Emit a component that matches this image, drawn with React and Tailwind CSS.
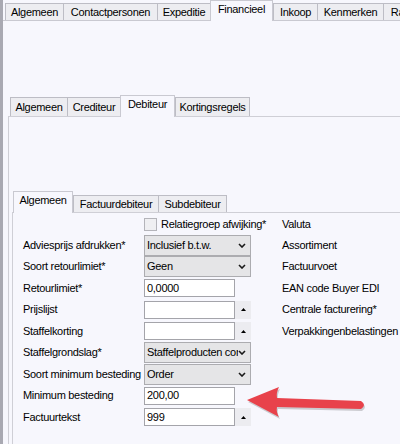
import React from "react";

function Tab({ label, w, selected, h }) {
  if (selected) {
    return (
      <div
        className="relative z-10 -mb-px bg-[#f7f7fd] border-t border-l border-r border-[#c9c9d1] flex items-start justify-center pt-[3px] shrink-0"
        style={{ width: w, height: h }}
      >
        {label}
      </div>
    );
  }
  return (
    <div
      className="bg-[#ededf1] border-t border-l border-r border-[#bdbdc5] flex items-center justify-center shrink-0 -mr-px"
      style={{ width: w, height: h }}
    >
      {label}
    </div>
  );
}

function Chevron() {
  return (
    <svg width="8" height="5" viewBox="0 0 8 5" className="shrink-0">
      <path d="M1 1 L4 4 L7 1" fill="none" stroke="#1a1a1a" strokeWidth="1.6" />
    </svg>
  );
}

function Select({ value }) {
  return (
    <div className="w-[107px] h-[21px] bg-[#e5e5e7] border border-[#acacb0] flex items-center pl-[2px] pr-[4px]">
      <span className="flex-1 min-w-0 overflow-hidden whitespace-nowrap">{value}</span>
      <Chevron />
    </div>
  );
}

function Input({ value, spin }) {
  return (
    <div className="flex items-center h-[18px]">
      <div className="w-[91px] h-[18px] bg-white border border-[#a4a4aa] pl-[2px] flex items-center whitespace-nowrap overflow-hidden">
        {value}
      </div>
      {spin && (
        <div className="w-[16px] h-[18px] bg-[#ececf0] flex items-center justify-center">
          <svg width="5" height="3" viewBox="0 0 5 3">
            <path d="M0 3 L2.5 0 L5 3Z" fill="#000" />
          </svg>
        </div>
      )}
    </div>
  );
}

export default function App() {
  const rows = [
    ["Adviesprijs afdrukken*", <Select value="Inclusief b.t.w." />, "Assortiment"],
    ["Soort retourlimiet*", <Select value="Geen" />, "Factuurvoet"],
    ["Retourlimiet*", <Input value="0,0000" />, "EAN code Buyer EDI"],
    ["Prijslijst", <Input value="" spin />, "Centrale facturering*"],
    ["Staffelkorting", <Input value="" spin />, "Verpakkingenbelastingen"],
    ["Staffelgrondslag*", <Select value="Staffelproducten combineren" />, ""],
    ["Soort minimum besteding", <Select value="Order" />, ""],
    ["Minimum besteding", <Input value="200,00" />, ""],
    ["Factuurtekst", <Input value="999" spin />, ""],
  ];

  return (
    <div className="w-[400px] h-[444px] overflow-hidden bg-[#f7f7fd] flex relative text-[11px] tracking-[-0.3px] text-black font-['Liberation_Sans',Arial,sans-serif] leading-none">
      <div className="w-[3px] shrink-0 bg-[#a9a9b2]" />
      <div className="flex-1 min-w-0 flex flex-col">
        {/* Row 1 tabs */}
        <div className="flex items-end h-[26px] pl-[2px]">
          <Tab label="Algemeen" w={59} h={17} />
          <Tab label="Contactpersonen" w={95} h={17} />
          <Tab label="Expeditie" w={54} h={17} />
          <Tab label="Financieel" w={63} h={21} selected />
          <Tab label="Inkoop" w={45} h={17} />
          <Tab label="Kenmerken" w={67} h={17} />
          <Tab label="Rapportage" w={70} h={17} />
        </div>
        <div className="flex-1 border-t border-[#c9c9d1]">
          <div className="ml-[5px]">
            {/* Row 2 tabs */}
            <div className="flex items-end h-[22px] pl-[2px] mt-[73px]">
              <Tab label="Algemeen" w={58} h={19} />
              <Tab label="Crediteur" w={54} h={19} />
              <Tab label="Debiteur" w={55} h={22} selected />
              <Tab label="Kortingsregels" w={75} h={19} />
            </div>
            <div className="border-l border-t border-[#cfcfd6]">
              <div className="ml-[3px]">
                {/* Row 3 tabs */}
                <div className="flex items-end h-[22px] pl-[1px] mt-[73px]">
                  <Tab label="Algemeen" w={60} h={22} selected />
                  <Tab label="Factuurdebiteur" w={86} h={17} />
                  <Tab label="Subdebiteur" w={69} h={17} />
                </div>
                <div className="border-l border-t border-[#cfcfd6] pl-[10px] h-[300px]">
                  <div className="grid grid-cols-[121px_107px_1fr] grid-rows-[22px_21px_21px_22px_21px_22px_21px_22px_21px_22px] items-center">
                    <div />
                    <div className="flex items-center gap-[4px] whitespace-nowrap">
                      <div className="w-[13px] h-[13px] bg-[#efeff2] border border-[#b4b4ba] shrink-0" />
                      <span>Relatiegroep afwijking*</span>
                    </div>
                    <div className="pl-[31px] whitespace-nowrap">Valuta</div>
                    {rows.map(([label, ctrl, right], i) => (
                      <React.Fragment key={i}>
                        <div className="whitespace-nowrap">{label}</div>
                        <div>{ctrl}</div>
                        <div className="pl-[31px] whitespace-nowrap">{right}</div>
                      </React.Fragment>
                    ))}
                  </div>
                </div>
              </div>
            </div>
          </div>
        </div>
      </div>

      {/* Red arrow annotation */}
      <svg
        className="absolute left-0 top-0 pointer-events-none"
        width="400"
        height="444"
        viewBox="0 0 400 444"
      >
        <path
          d="M248 402 L280 389 Q277 395 278 400 L362 403 Q368 407 362 411 L278 409 Q277 414 280 419 Z"
          fill="rgba(0,0,0,0.18)"
        />
        <path
          d="M247 400 L279 387 Q276 393 277 398 L361 401 Q367 405 361 409 L277 407 Q276 412 279 417 Z"
          fill="#e8424b"
        />
      </svg>
    </div>
  );
}
